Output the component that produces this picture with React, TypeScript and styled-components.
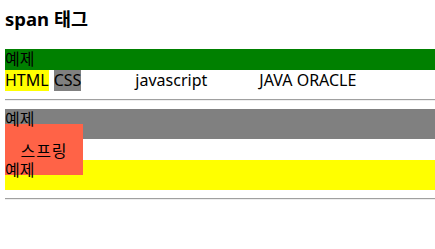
import React from "react";
import styled, { createGlobalStyle } from "styled-components";

const GlobalStyle = createGlobalStyle`
  body {
    margin: 0 0 0 5px;
    background: #fff;
    color: #000;
    font-family: "Noto Sans", "Noto Sans CJK KR", sans-serif;
    font-size: 16px;
  }
`;

export default function App() {
  return (
    <>
      <GlobalStyle />
      <Title>span 태그</Title>
      <Band $bg="green" $h={21}><Label>예제</Label></Band>
      <Row>
        <Tag $bg="yellow">HTML</Tag>
        <Tag $bg="gray">CSS</Tag>
        <Word $w={124}>javascript</Word>
        <Word>JAVA ORACLE</Word>
      </Row>
      <Rule />
      <Stack>
        <Band $bg="gray" $h={30}><Label>예제</Label></Band>
        <Spacer />
        <Band $bg="yellow" $h={30}><Label>예제</Label></Band>
        <Badge>스프링</Badge>
      </Stack>
      <Rule />
    </>
  );
}

const Title = styled.h3`
  margin: 0;
  padding-top: 7px;
  height: 42px;
  font-size: 18.5px;
  font-weight: 700;
  line-height: 24px;
`;

const Band = styled.div<{ $bg: string; $h: number }>`
  background-color: ${(p) => p.$bg};
  height: ${(p) => p.$h}px;
  line-height: 21px;
`;

/* text sits above the tomato badge, backgrounds below it */
const Label = styled.span`
  position: relative;
  z-index: 1;
`;

const Row = styled.div`
  display: flex;
  align-items: flex-start;
  height: 21px;
  line-height: 21px;
`;

const Tag = styled.span<{ $bg: string }>`
  background-color: ${(p) => p.$bg};
  margin-right: 5px;
`;

const Word = styled.span<{ $w?: number }>`
  margin-left: ${(p) => (p.$w ? "49px" : "0")};
  width: ${(p) => (p.$w ? `${p.$w}px` : "auto")};
`;

const Rule = styled.hr`
  margin: 8px 0 8px;
  border: 0;
  border-top: 1px solid #a0a0a0;
  border-bottom: 1px solid #eeeeee;
`;

const Stack = styled.div`
  position: relative;
`;

const Spacer = styled.div`
  height: 21px;
`;

const Badge = styled.span`
  position: absolute;
  z-index: 0;
  left: 0;
  top: 15px;
  width: 78px;
  height: 51px;
  display: flex;
  align-items: center;
  justify-content: center;
  background-color: tomato;
  letter-spacing: 1px;
`;
